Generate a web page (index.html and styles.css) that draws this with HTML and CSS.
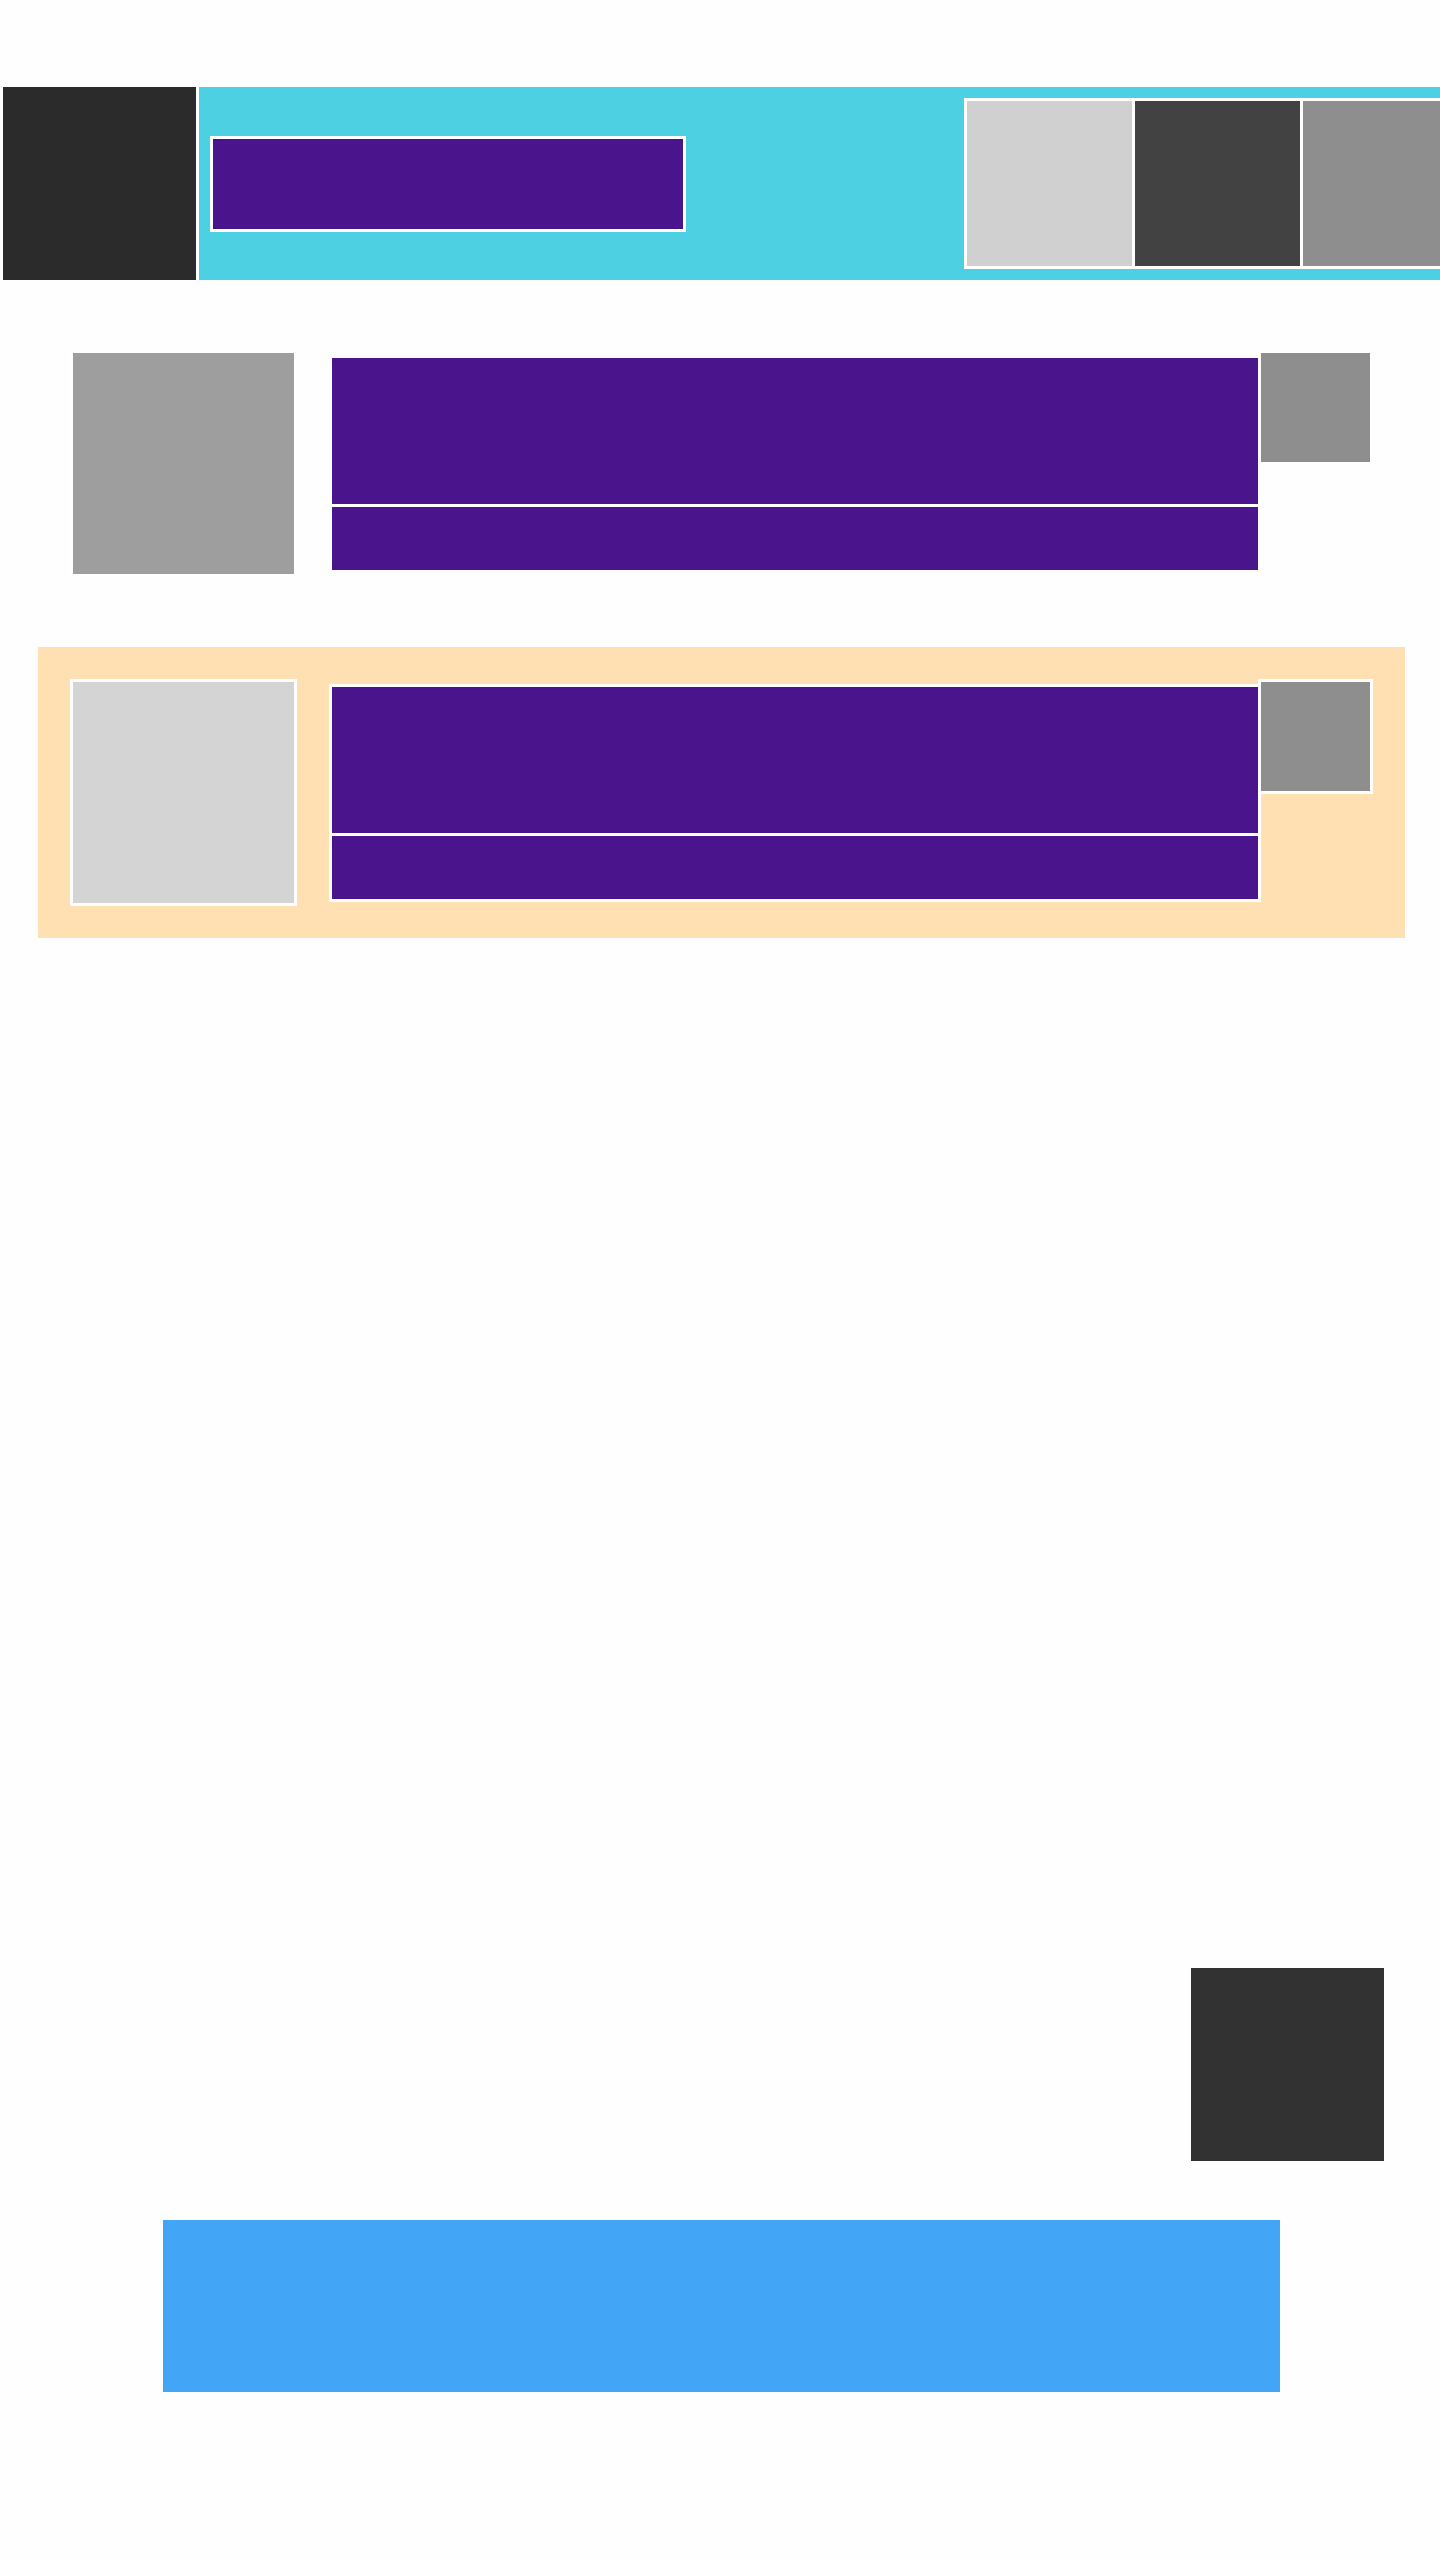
FILE: index.html
```html
<!DOCTYPE html>
<html lang="en">
<head>
<meta charset="utf-8">
<title>Page</title>
<link rel="stylesheet" href="styles.css">
</head>
<body>
<header class="header">
  <div class="logo"></div>
  <div class="title-box"></div>
  <div class="tiles">
    <div class="tile tile-light"></div>
    <div class="tile tile-dark"></div>
    <div class="tile tile-mid"></div>
  </div>
</header>
<main class="list">
  <section class="card">
    <div class="thumb thumb-a"></div>
    <div class="text-col">
      <div class="text-main"></div>
      <div class="text-sub"></div>
    </div>
    <div class="side"></div>
  </section>
  <section class="card card-active">
    <div class="thumb thumb-b"></div>
    <div class="text-col">
      <div class="text-main"></div>
      <div class="text-sub"></div>
    </div>
    <div class="side"></div>
  </section>
</main>
<div class="fab"></div>
<div class="banner"></div>
</body>
</html>
```
FILE: styles.css
```css
html, body {
  margin: 0;
  padding: 0;
  background: #fefefe;
  font-family: "Liberation Sans", Arial, sans-serif;
}
.header {
  margin-top: 87px;
  height: 193px;
  background: #4dd0e1;
  display: flex;
  align-items: center;
  overflow: hidden;
}
.logo {
  flex: 0 0 193px;
  align-self: stretch;
  background: #2b2b2b;
  border-left: 3px solid #fefefe;
  border-right: 3px solid #fefefe;
}
.title-box {
  flex: 0 0 auto;
  margin-left: 11px;
  width: 470px;
  height: 90px;
  background: #4a148c;
  border: 3px solid #fff;
}
.tiles {
  flex: 0 0 auto;
  margin-left: 278px;
  display: flex;
  gap: 3px;
  padding: 3px;
  background: #fff;
}
.tile {
  width: 165px;
  height: 165px;
}
.tile-light { background: #d0d0d0; }
.tile-dark { background: #424242; }
.tile-mid { background: #8e8e8e; }

.list {
  margin: 38px 0 0 38px;
  width: 1367px;
  display: flex;
  flex-direction: column;
  gap: 38px;
}
.card {
  display: flex;
  align-items: center;
  padding: 32px;
}
.card-active {
  background: #fee0b3;
}
.thumb {
  width: 221px;
  height: 221px;
  border: 3px solid #fff;
  flex: 0 0 auto;
}
.thumb-a { background: #9e9e9e; }
.thumb-b { background: #d4d4d4; }
.text-col {
  margin-left: 32px;
  display: flex;
  flex-direction: column;
  gap: 3px;
  padding: 3px;
  background: #fff;
}
.text-main {
  width: 926px;
  height: 146px;
  background: #4a148c;
}
.text-sub {
  width: 926px;
  height: 63px;
  background: #4a148c;
}
.side {
  align-self: flex-start;
  margin-left: -3px;
  width: 109px;
  height: 109px;
  background: #8e8e8e;
  border: 3px solid #fff;
}
.fab {
  margin: 1030px 0 0 1191px;
  width: 193px;
  height: 193px;
  background: #323232;
}
.banner {
  margin: 59px 0 0 163px;
  width: 1117px;
  height: 172px;
  background: #42a5f5;
}
```
